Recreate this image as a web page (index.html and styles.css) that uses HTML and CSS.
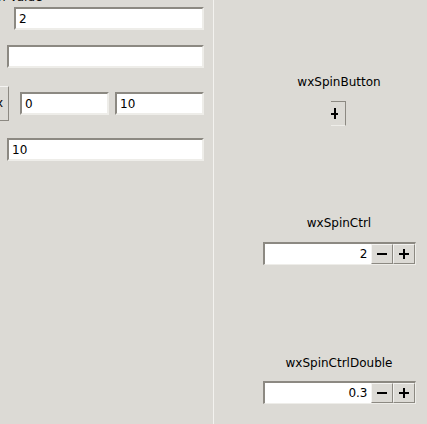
FILE: index.html
```html
<!DOCTYPE html>
<html>
<head>
<meta charset="utf-8">
<link rel="stylesheet" href="styles.css">
</head>
<body>
<div class="left">
  <div class="caption">n Value</div>
  <div class="field f1">2</div>
  <div class="field f2"></div>
  <div class="row">
    <div class="btn">x</div>
    <div class="field f3">0</div>
    <div class="field f3">10</div>
  </div>
  <div class="field f4">10</div>
</div>
<div class="sep"></div>
<div class="right">
  <div class="section s1">
    <div class="label">wxSpinButton</div>
    <div class="spinbtn">
      <svg width="14" height="24" viewBox="0 0 14 24"><rect x="0" y="11" width="7" height="2" fill="#000"/><rect x="3" y="6" width="2" height="11" fill="#000"/></svg>
    </div>
  </div>
  <div class="section s2">
    <div class="label">wxSpinCtrl</div>
    <div class="spinctrl">
      <div class="entry">2</div>
      <div class="sbtn"><svg width="12" height="12" viewBox="0 0 12 12"><rect x="1" y="5" width="10" height="2" fill="#000"/></svg></div>
      <div class="sbtn"><svg width="12" height="12" viewBox="0 0 12 12"><rect x="1" y="5" width="10" height="2" fill="#000"/><rect x="5" y="1" width="2" height="10" fill="#000"/></svg></div>
    </div>
  </div>
  <div class="section s3">
    <div class="label">wxSpinCtrlDouble</div>
    <div class="spinctrl">
      <div class="entry">0.3</div>
      <div class="sbtn"><svg width="12" height="12" viewBox="0 0 12 12"><rect x="1" y="5" width="10" height="2" fill="#000"/></svg></div>
      <div class="sbtn"><svg width="12" height="12" viewBox="0 0 12 12"><rect x="1" y="5" width="10" height="2" fill="#000"/><rect x="5" y="1" width="2" height="10" fill="#000"/></svg></div>
    </div>
  </div>
</div>
</body>
</html>
```

FILE: styles.css
```css
html, body {
  margin: 0;
  padding: 0;
}
body {
  width: 427px;
  height: 424px;
  overflow: hidden;
  background: #dcdad5;
  font-family: "DejaVu Sans", sans-serif;
  font-size: 12px;
  line-height: 14px;
  color: #000;
  display: flex;
}
.left {
  width: 213px;
  flex: none;
  display: flex;
  flex-direction: column;
  align-items: flex-start;
}
.caption {
  margin-top: -9px;
  margin-left: -2px;
  height: 12px;
  line-height: 12px;
}
.field {
  box-sizing: border-box;
  height: 23px;
  background: #fff;
  border-top: 2px solid #8c8982;
  border-left: 2px solid #8c8982;
  border-bottom: 2px solid #eeede9;
  border-right: 2px solid #eeede9;
  padding: 2px 0 0 3px;
  line-height: 16px;
}
.f1 {
  margin-top: 4px;
  margin-left: 14px;
  width: 190px;
}
.f2 {
  margin-top: 15px;
  margin-left: 7px;
  width: 197px;
}
.row {
  margin-top: 18px;
  display: flex;
  align-items: center;
  gap: 6px;
}
.btn {
  box-sizing: border-box;
  width: 40px;
  height: 35px;
  margin-left: -31px;
  margin-right: 5px;
  border: 1px solid #8c8982;
  border-top-color: #f4f3f1;
  border-left-color: #f4f3f1;
  text-align: right;
  padding-right: 5px;
  line-height: 33px;
}
.f3 {
  width: 89px;
}
.f4 {
  margin-top: 17px;
  margin-left: 7px;
  width: 197px;
}
.sep {
  width: 1px;
  flex: none;
  background: #f3f2ef;
}
.right {
  width: 250px;
  flex: none;
  display: flex;
  flex-direction: column;
  align-items: center;
}
.section {
  display: flex;
  flex-direction: column;
  align-items: center;
  gap: 12px;
}
.s1 { margin-top: 75px; }
.s2 { margin-top: 90px; gap: 12px; }
.s3 { margin-top: 91px; gap: 11px; }
.spinbtn {
  box-sizing: border-box;
  width: 15px;
  height: 25px;
  border-top: 1px solid #8c8982;
  border-right: 1px solid #8c8982;
  border-bottom: 1px solid #eeede9;
  display: flex;
}
.spinctrl {
  box-sizing: border-box;
  width: 153px;
  height: 23px;
  display: flex;
  border-top: 2px solid #8c8982;
  border-left: 2px solid #8c8982;
  border-bottom: 1px solid #eeede9;
  border-right: 1px solid #eeede9;
}
.entry {
  flex: 1;
  background: #fff;
  text-align: right;
  padding-right: 3px;
  line-height: 20px;
}
.sbtn {
  box-sizing: border-box;
  width: 22px;
  background: #dcdad5;
  border: 1px solid #8c8982;
  border-top-color: #f4f3f1;
  border-left-color: #f4f3f1;
  display: flex;
  align-items: center;
  justify-content: center;
}
```
